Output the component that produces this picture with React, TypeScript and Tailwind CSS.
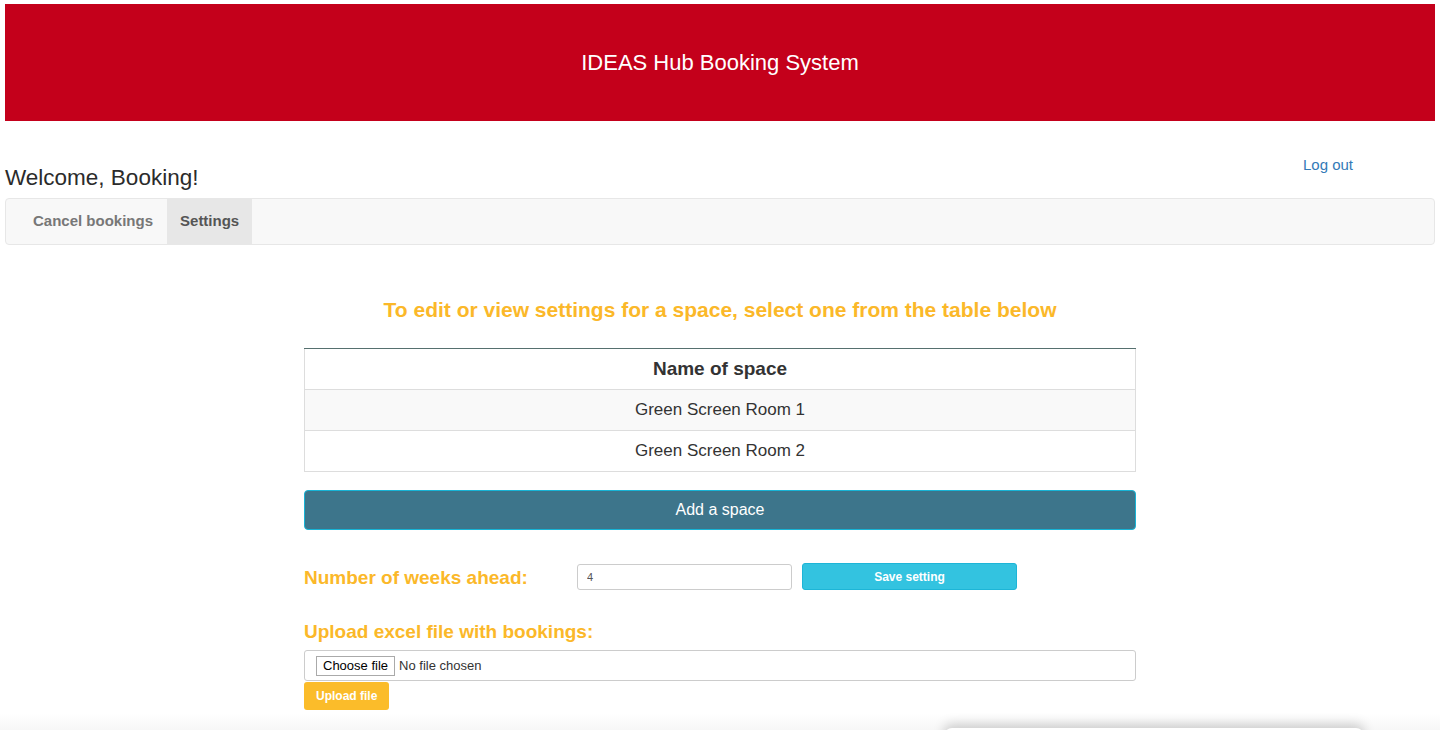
import { useState } from 'react';

const spaces = ['Green Screen Room 1', 'Green Screen Room 2'];

export default function App() {
    const [weeks, setWeeks] = useState('4');

    return (
        <div className="relative min-h-[730px] overflow-hidden bg-white font-['Liberation_Sans',Arial,sans-serif] text-[#333]">
            {/* header band */}
            <div className="mx-[5px] mt-[4px] flex h-[117px] items-center justify-center bg-[#c4001b]">
                <h1 className="text-[22px] text-white">IDEAS Hub Booking System</h1>
            </div>

            <div className="mx-[5px]">
                <div className="flex items-start justify-between pt-[34px]">
                    <h2 className="mt-[8px] text-[22.5px] leading-[30px] text-[#2b2b2b]">Welcome, Booking!</h2>
                    <a href="#" className="mr-[82px] text-[15px] leading-[20px] text-[#337ab7]">
                        Log out
                    </a>
                </div>

                {/* nav */}
                <div className="mt-[5px] flex h-[47px] rounded border border-[#e7e7e7] bg-[#f8f8f8] pl-[13px]">
                    <a href="#" className="flex items-center px-[14px] text-[15px] font-bold text-[#777]">
                        Cancel bookings
                    </a>
                    <a href="#" className="flex items-center bg-[#e7e7e7] px-[13px] text-[15px] font-bold text-[#555]">
                        Settings
                    </a>
                </div>
            </div>

            <div className="mx-auto w-[832px] pt-[50px]">
                <h3 className="text-center text-[21px] leading-[30px] font-bold text-[#fbb829]">
                    To edit or view settings for a space, select one from the table below
                </h3>

                <table className="mt-[23px] w-full border-collapse border border-[#ddd] text-center text-[17px]">
                    <thead>
                        <tr className="border-t border-t-[#56706f]">
                            <th className="h-[41px] text-[19px] font-bold">Name of space</th>
                        </tr>
                    </thead>
                    <tbody>
                        {spaces.map((s, i) => (
                            <tr key={s} className={i % 2 === 0 ? 'bg-[#f9f9f9]' : 'bg-white'}>
                                <td className="h-[41px] border-t border-[#ddd]">{s}</td>
                            </tr>
                        ))}
                    </tbody>
                </table>

                <button className="mt-[18px] h-[40px] w-full rounded border border-[#17b4d6] bg-[#3d758b] text-[16px] text-white">
                    Add a space
                </button>

                <div className="mt-[33px] flex items-center">
                    <label className="relative top-[1px] w-[273px] text-[19px] leading-[27px] font-bold text-[#fbb829]">Number of weeks ahead:</label>
                    <input
                        value={weeks}
                        onChange={(e) => setWeeks(e.target.value)}
                        className="h-[26px] w-[215px] rounded-[3px] border border-[#ccc] px-[9px] text-[11px] text-[#555] outline-none"
                    />
                    <button className="ml-[10px] h-[27px] w-[215px] rounded-[3px] border border-[#1db5d7] bg-[#33c3e0] text-[12px] font-bold text-white">
                        Save setting
                    </button>
                </div>

                <p className="mt-[28px] text-[19px] leading-[27px] font-bold text-[#fbb829]">Upload excel file with bookings:</p>

                <div className="mt-[5px] flex h-[31px] items-center rounded-[3px] border border-[#ccc] px-[11px] text-[13px]">
                    <span className="flex h-[20px] items-center border border-[#aaa] bg-white px-[6px] text-black">
                        Choose file
                    </span>
                    <span className="ml-[4px] text-[#333]">No file chosen</span>
                </div>

                <button className="mt-[1px] h-[28px] rounded-[3px] bg-[#fbbc2a] px-[12px] text-[12px] font-bold text-white">
                    Upload file
                </button>
            </div>

            {/* window shadow at bottom edge */}
            <div className="pointer-events-none absolute bottom-0 left-0 h-[16px] w-full bg-gradient-to-b from-transparent to-[#f7f7f7]" />
            <div className="pointer-events-none absolute -bottom-[14px] left-[944px] h-[16px] w-[420px] rounded-t-lg bg-white shadow-[0_-4px_12px_rgba(0,0,0,0.18)]" />
        </div>
    );
}
